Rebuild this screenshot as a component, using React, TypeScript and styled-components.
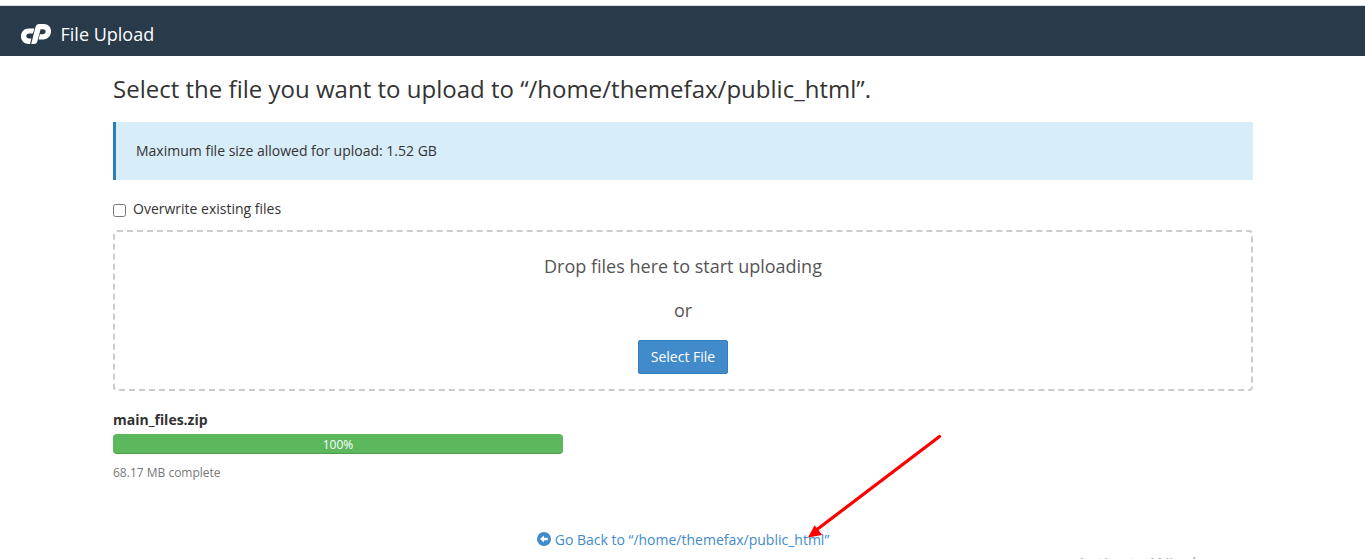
import React from 'react';
import styled, { createGlobalStyle } from 'styled-components';

const GlobalStyle = createGlobalStyle`
  *, *::before, *::after { box-sizing: border-box; }
  html, body { margin: 0; height: 100%; overflow: hidden; background: #fff; }
  body {
    font-family: 'Open Sans', 'Noto Sans', sans-serif;
    font-size: 14px;
    line-height: 20px;
    color: #333;
  }
`;

const Page = styled.div`
  position: relative;
  height: 559px;
  overflow: hidden;
  padding-top: 5px;
`;

const Header = styled.header`
  display: flex;
  align-items: center;
  gap: 9.5px;
  height: 51px;
  padding: 6px 21px 0;
  border-top: 1px solid #d5dde0;
  background: #293a4a;
  color: #fff;
`;

const Logo = styled.svg`
  width: 30px;
  height: 20px;
`;

const HeaderTitle = styled.span`
  font-size: 18px;
  line-height: 26px;
`;

const Content = styled.main`
  width: 1140px;
  margin-left: 113px;
  padding-top: 17px;
`;

const Heading = styled.h1`
  margin: 0 0 18px;
  font-size: 24px;
  font-weight: 400;
  line-height: 31px;
  letter-spacing: 0.01px;
`;

const Notice = styled.div`
  height: 58px;
  padding: 19px 20px;
  border-left: 3px solid #2a80b9;
  background: #d7edf9;
`;

const CheckRow = styled.label`
  display: flex;
  gap: 7px;
  margin-top: 19px;
  height: 31px;
`;

const Checkbox = styled.input`
  width: 13px;
  height: 13px;
  margin: 5px 0 0;
`;

const DropZone = styled.section`
  display: flex;
  flex-direction: column;
  align-items: center;
  height: 161px;
  padding-top: 21px;
  border: 2px dashed #ccc;
  border-radius: 4px;
  color: #555;
  font-size: 18px;
  line-height: 26px;
`;

const DropText = styled.p`
  margin: 0 0 18px;
`;

const Button = styled.button`
  width: 90px;
  height: 34px;
  margin-top: -1px;
  padding: 0;
  border: 1px solid #357ebd;
  border-radius: 2px;
  background: #428bca;
  color: #fff;
  font: 14px/20px 'Open Sans', sans-serif;
`;

const Upload = styled.section`
  width: 450px;
  margin-top: 19px;
`;

const FileName = styled.div`
  margin-bottom: 4px;
  font-weight: 700;
`;

const Progress = styled.div`
  height: 20px;
  padding-top: 1px;
  border-radius: 4px;
  background: #5cb85c;
  box-shadow: inset 0 -1px 0 rgba(0, 0, 0, 0.15);
  color: #fff;
  font-size: 12px;
  text-align: center;
`;

const Status = styled.div`
  margin-top: 9px;
  color: #777;
  font-size: 12px;
`;

const BackLink = styled.a`
  display: flex;
  justify-content: center;
  align-items: center;
  gap: 4px;
  margin-top: 47px;
  color: #428bca;
  text-decoration: none;
`;

const BackIcon = styled.svg`
  width: 14px;
  height: 14px;
  margin-top: -2px;
`;

const Arrow = styled.svg`
  position: absolute;
  left: 800px;
  top: 430px;
`;

const Watermark = styled.div`
  position: absolute;
  left: 1076px;
  top: 550px;
  color: #aaa;
  font-size: 19px;
  line-height: 28px;
  white-space: nowrap;
`;

export default function App() {
  return (
    <Page>
      <GlobalStyle />
      <Header>
        <Logo viewBox="0 0 30 20" fill="#fff">
          <path d="M7.5 4.5H13.4L11.9 9.6H8C6.3 9.6 5.3 10.6 5.3 12.1C5.3 13.6 6.3 14.5 7.8 14.5H10.4L9 19.9H7.5C3 19.9 0 16.6 0 12.2C0 7.8 3.2 4.5 7.5 4.5Z" />
          <path d="M10.2 20L14.6 2.8C15.1 1 16.4 0 18.2 0H22.6C27.2 0 30 3 30 7.3C30 12 26.8 15.4 22.2 15.4H17.6L18.9 10.2H21.8C23.7 10.2 24.7 9.1 24.7 7.6C24.7 6.1 23.7 5.2 22.2 5.2H19.6L16.3 17.5C15.8 19.2 14.6 20 13.1 20Z" />
        </Logo>
        <HeaderTitle>File Upload</HeaderTitle>
      </Header>
      <Content>
        <Heading>Select the file you want to upload to “/home/themefax/public_html”.</Heading>
        <Notice>Maximum file size allowed for upload: 1.52 GB</Notice>
        <CheckRow>
          <Checkbox type="checkbox" />
          Overwrite existing files
        </CheckRow>
        <DropZone>
          <DropText>Drop files here to start uploading</DropText>
          <DropText>or</DropText>
          <Button>Select File</Button>
        </DropZone>
        <Upload>
          <FileName>main_files.zip</FileName>
          <Progress>100%</Progress>
          <Status>68.17 MB complete</Status>
        </Upload>
        <BackLink>
          <BackIcon viewBox="0 0 14 14">
            <circle cx="7" cy="7" r="7" fill="#428bca" />
            <path d="M3 7L7 3.4V5.8H10.8V8.2H7V10.6Z" fill="#fff" />
          </BackIcon>
          <span>Go Back to “/home/themefax/public_html”</span>
        </BackLink>
      </Content>
      <Arrow width="150" height="115" viewBox="0 0 150 115">
        <path d="M139.5 6.5L17 99.5" stroke="#f00" strokeWidth="3.2" strokeLinecap="round" />
        <path d="M8 107.5L14.6 95.2L22.2 105Z" fill="#f00" />
      </Arrow>
      <Watermark>Activate Windows</Watermark>
    </Page>
  );
}
